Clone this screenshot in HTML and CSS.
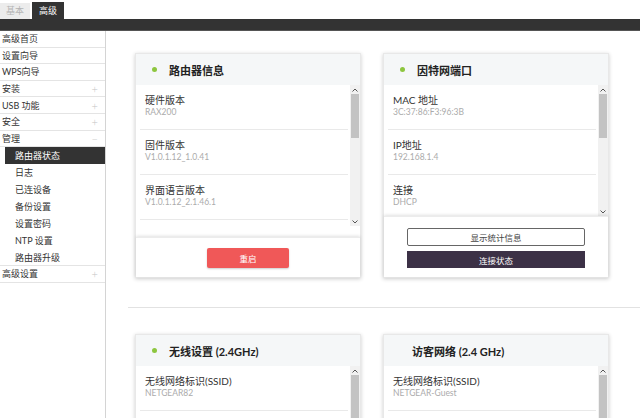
FILE: index.html
```html
<!DOCTYPE html>
<html lang="zh">
<head>
<meta charset="utf-8">
<title>高级</title>
<link rel="stylesheet" href="styles.css">
</head>
<body>
<div class="tabs">
  <div class="tab tab-basic">基本</div>
  <div class="tab tab-adv">高级</div>
</div>
<div class="topbar"></div>
<div class="layout">
  <nav class="sidebar">
    <div class="nav-item">高级首页</div>
    <div class="nav-item">设置向导</div>
    <div class="nav-item">WPS向导</div>
    <div class="nav-item">安装<span class="sign">+</span></div>
    <div class="nav-item">USB 功能<span class="sign">+</span></div>
    <div class="nav-item">安全<span class="sign">+</span></div>
    <div class="nav-item">管理<span class="sign">−</span></div>
    <div class="nav-sub active">路由器状态</div>
    <div class="nav-sub">日志</div>
    <div class="nav-sub">已连设备</div>
    <div class="nav-sub">备份设置</div>
    <div class="nav-sub">设置密码</div>
    <div class="nav-sub">NTP 设置</div>
    <div class="nav-sub last">路由器升级</div>
    <div class="nav-item">高级设置<span class="sign">+</span></div>
  </nav>
  <main class="content">
    <div class="cards">
      <section class="card">
        <div class="card-head"><span class="dot"></span><span class="title">路由器信息</span></div>
        <div class="card-body body-tall">
          <div class="rows">
            <div class="item"><div class="label">硬件版本</div><div class="value">RAX200</div></div>
            <div class="item"><div class="label">固件版本</div><div class="value">V1.0.1.12_1.0.41</div></div>
            <div class="item"><div class="label">界面语言版本</div><div class="value">V1.0.1.12_2.1.46.1</div></div>
            <div class="item"><div class="label">&nbsp;</div><div class="value">&nbsp;</div></div>
          </div>
          <div class="sb">
            <div class="sb-arrow"><svg width="6" height="4" viewBox="0 0 6 4"><polyline points="0.5,3.5 3,1 5.5,3.5" fill="none" stroke="#555" stroke-width="1"/></svg></div>
            <div class="sb-thumb"></div>
            <div class="sb-fill"></div>
            <div class="sb-arrow"><svg width="6" height="4" viewBox="0 0 6 4"><polyline points="0.5,0.5 3,3 5.5,0.5" fill="none" stroke="#555" stroke-width="1"/></svg></div>
          </div>
        </div>
        <div class="card-foot foot-single">
          <button class="btn btn-red">重启</button>
        </div>
      </section>
      <section class="card">
        <div class="card-head"><span class="dot"></span><span class="title">因特网端口</span></div>
        <div class="card-body body-short">
          <div class="rows">
            <div class="item"><div class="label">MAC 地址</div><div class="value">3C:37:86:F3:96:3B</div></div>
            <div class="item"><div class="label">IP地址</div><div class="value">192.168.1.4</div></div>
            <div class="item"><div class="label">连接</div><div class="value">DHCP</div></div>
          </div>
          <div class="sb">
            <div class="sb-arrow"><svg width="6" height="4" viewBox="0 0 6 4"><polyline points="0.5,3.5 3,1 5.5,3.5" fill="none" stroke="#555" stroke-width="1"/></svg></div>
            <div class="sb-thumb"></div>
            <div class="sb-fill"></div>
            <div class="sb-arrow"><svg width="6" height="4" viewBox="0 0 6 4"><polyline points="0.5,0.5 3,3 5.5,0.5" fill="none" stroke="#555" stroke-width="1"/></svg></div>
          </div>
        </div>
        <div class="card-foot foot-double">
          <button class="btn btn-outline">显示统计信息</button>
          <button class="btn btn-dark">连接状态</button>
        </div>
      </section>
    </div>
    <hr class="divider">
    <div class="cards">
      <section class="card">
        <div class="card-head"><span class="dot"></span><span class="title">无线设置 (2.4GHz)</span></div>
        <div class="card-body body-tall">
          <div class="rows">
            <div class="item"><div class="label">无线网络标识(SSID)</div><div class="value">NETGEAR82</div></div>
          </div>
          <div class="sb">
            <div class="sb-arrow"><svg width="6" height="4" viewBox="0 0 6 4"><polyline points="0.5,3.5 3,1 5.5,3.5" fill="none" stroke="#555" stroke-width="1"/></svg></div>
            <div class="sb-thumb"></div>
            <div class="sb-fill"></div>
          </div>
        </div>
      </section>
      <section class="card">
        <div class="card-head no-dot"><span class="title">访客网络 (2.4 GHz)</span></div>
        <div class="card-body body-tall">
          <div class="rows">
            <div class="item"><div class="label">无线网络标识(SSID)</div><div class="value">NETGEAR-Guest</div></div>
          </div>
          <div class="sb">
            <div class="sb-arrow"><svg width="6" height="4" viewBox="0 0 6 4"><polyline points="0.5,3.5 3,1 5.5,3.5" fill="none" stroke="#555" stroke-width="1"/></svg></div>
            <div class="sb-thumb"></div>
            <div class="sb-fill"></div>
          </div>
        </div>
      </section>
    </div>
  </main>
</div>
</body>
</html>
```
FILE: styles.css
```css
html, body {
  margin: 0;
  padding: 0;
}
body {
  width: 640px;
  height: 418px;
  overflow: hidden;
  background: #fff;
  color: #333;
  font-family: Lato, "Noto Sans CJK SC", sans-serif;
}

/* tabs */
.tabs {
  display: flex;
  align-items: flex-end;
  gap: 2px;
  height: 19px;
}
.tab {
  height: 16px;
  font-size: 9px;
  line-height: 16px;
  text-align: center;
}
.tab-basic {
  width: 30px;
  background: #ececec;
  color: #b4b4b4;
}
.tab-adv {
  width: 32px;
  height: 17px;
  line-height: 17px;
  background: #333;
  color: #fff;
}
.topbar {
  height: 11px;
  background: #333;
  border-bottom: 1px solid #555;
}

.layout {
  display: flex;
  height: 387px;
}

/* sidebar */
.sidebar {
  width: 105px;
  flex: none;
  border-right: 1px solid #d4d4d4;
  font-size: 9px;
  color: #333;
}
.nav-item {
  box-sizing: border-box;
  height: 16.6px;
  padding: 0 7px 0 2px;
  border-bottom: 1px solid #e4e4e4;
  display: flex;
  align-items: center;
  justify-content: space-between;
}
.sign {
  color: #c4c4c4;
  font-size: 11px;
  font-weight: 300;
}
.nav-sub {
  height: 17px;
  padding-left: 15px;
  display: flex;
  align-items: center;
}
.nav-sub.active {
  margin-left: 5px;
  padding-left: 10px;
  background: #333;
  color: #fff;
}
.nav-sub.last {
  box-sizing: border-box;
  border-bottom: 1px solid #e4e4e4;
}

/* content */
.content {
  flex: 1;
  padding: 22px 0 0 22px;
  overflow: hidden;
}
.cards {
  display: flex;
  gap: 22px;
  padding-left: 7px;
}
.divider {
  border: 0;
  border-top: 1px solid #e2e2e2;
  margin: 29px 0 26px 0;
}

.card {
  box-sizing: border-box;
  width: 226px;
  height: 225px;
  flex: none;
  border: 1px solid #e8e8e8;
  background: #fff;
  box-shadow: 0 1px 4px rgba(0, 0, 0, 0.2);
  display: flex;
  flex-direction: column;
}
.card-head {
  height: 31px;
  flex: none;
  background: #f5f7f8;
  display: flex;
  align-items: center;
  padding-left: 16px;
}
.card-head.no-dot {
  padding-left: 28px;
}
.dot {
  width: 5px;
  height: 5px;
  border-radius: 50%;
  background: #8dc63f;
  margin-right: 12px;
}
.title {
  font-size: 11px;
  font-weight: 700;
  color: #222;
}

.card-body {
  display: flex;
  flex: none;
  overflow: hidden;
}
.body-tall {
  height: 141px;
}
.body-short {
  height: 131px;
}
.rows {
  flex: 1;
  padding: 0 2px 0 4px;
  overflow: hidden;
}
.item {
  padding: 9px 0 11px 5px;
  border-bottom: 1px solid #e9e9e9;
}
.label {
  font-size: 10px;
  line-height: 13px;
  color: #333;
  white-space: nowrap;
}
.value {
  font-size: 8.5px;
  line-height: 11px;
  color: #ababab;
  white-space: nowrap;
}

/* fake scrollbar */
.sb {
  width: 10px;
  flex: none;
  background: #f1f1f1;
  display: flex;
  flex-direction: column;
}
.sb-arrow {
  height: 9px;
  display: flex;
  align-items: center;
  justify-content: center;
}
.sb-thumb {
  height: 44px;
  margin: 0 1px;
  background: #c3c3c3;
}
.sb-fill {
  flex: 1;
}

/* footers */
.card-foot {
  flex: none;
  display: flex;
  flex-direction: column;
  align-items: center;
  box-shadow: 0 -1px 3px rgba(0, 0, 0, 0.12);
  border-top: 1px solid #ececec;
}
.foot-single {
  margin-top: auto;
  height: 39px;
  justify-content: center;
}
.foot-double {
  flex: 1;
  padding-top: 11px;
  gap: 5px;
}
.btn {
  font-family: Lato, "Noto Sans CJK SC", sans-serif;
  font-size: 8.5px;
  border: 0;
  padding: 0;
  cursor: pointer;
}
.btn-red {
  width: 82px;
  height: 20px;
  background: #f05858;
  color: #fff;
  border-radius: 2px;
  box-shadow: 0 1px 2px rgba(0, 0, 0, 0.2);
}
.btn-outline {
  box-sizing: border-box;
  width: 178px;
  height: 18px;
  background: #fff;
  color: #444;
  border: 1px solid #666;
  border-radius: 2px;
}
.btn-dark {
  width: 178px;
  height: 17px;
  background: #3c3146;
  color: #fff;
}
```
